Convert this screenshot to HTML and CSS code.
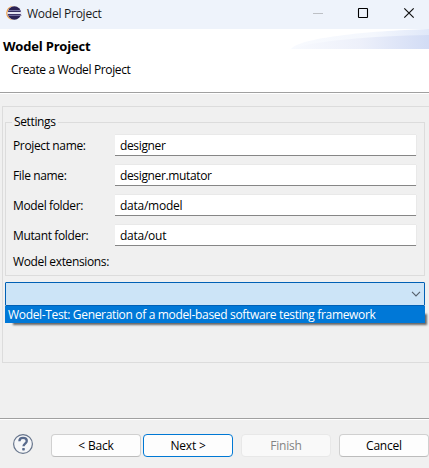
FILE: index.html
```html
<!DOCTYPE html>
<html lang="en">
<head>
<meta charset="utf-8">
<title>Wodel Project</title>
<link rel="stylesheet" href="styles.css">
</head>
<body>
<div class="window">
  <div class="titlebar">
    <svg class="logo" width="16" height="16" viewBox="0 0 16 16">
      <circle cx="7.2" cy="8" r="7" fill="#f39a35"/>
      <circle cx="8.4" cy="8" r="7" fill="#eef3fb"/>
      <circle cx="8.4" cy="8" r="6.7" fill="#2c2255"/>
      <path d="M2 5.6h13M1.5 10.3h14" stroke="#857fae" stroke-width="1"/>
      <path d="M1.4 8h14.2" stroke="#e6e5f2" stroke-width="2"/>
    </svg>
    <span class="caption">Wodel Project</span>
    <svg class="controls" width="110" height="20" viewBox="0 0 110 20">
      <path d="M4 10.5h10" stroke="#bdc0c5"/>
      <rect x="49.5" y="5.5" width="9" height="9" rx=".5" fill="none" stroke="#000" stroke-width="1.1"/>
      <path d="M95.3 5.3l9.4 9.4M104.7 5.3l-9.4 9.4" stroke="#111" stroke-width="1.2"/>
    </svg>
  </div>
  <div class="header">
    <h1>Wodel Project</h1>
    <p>Create a Wodel Project</p>
    <svg class="swoosh" width="138" height="20" viewBox="0 0 138 20">
      <defs>
        <linearGradient id="wave"><stop offset="0" stop-color="#f8fafe"/><stop offset=".5" stop-color="#edf0fa"/><stop offset="1" stop-color="#d2dcf5"/></linearGradient>
        <linearGradient id="haze"><stop offset="0" stop-color="#f8fafe"/><stop offset=".6" stop-color="#f4f7fd"/><stop offset="1" stop-color="#e0e8f9"/></linearGradient>
      </defs>
      <path d="M0 20C8 9 75 2 138 0v20z" fill="url(#haze)"/>
      <path d="M0 20C22 12 80 7 138 6v14z" fill="url(#wave)"/>
    </svg>
  </div>
  <div class="content">
    <div class="panel">
      <fieldset class="settings">
        <legend>Settings</legend>
        <div class="row"><label>Project name:</label><div class="field"><span>designer</span></div></div>
        <div class="row"><label>File name:</label><div class="field"><span>designer.mutator</span></div></div>
        <div class="row"><label>Model folder:</label><div class="field"><span class="path">data/model</span></div></div>
        <div class="row"><label>Mutant folder:</label><div class="field"><span class="path">data/out</span></div></div>
        <div class="row last"><label>Wodel extensions:</label></div>
      </fieldset>
      <div class="combo">
        <svg width="10" height="6" viewBox="0 0 10 6"><path d="M1 .9l4 4 4-4" fill="none" stroke="#555f6b" stroke-width="1.1"/></svg>
      </div>
      <div class="option"><span>Wodel-Test: Generation of a model-based software testing framework</span></div>
    </div>
  </div>
  <div class="footer">
    <svg class="help" width="22" height="22" viewBox="0 0 22 22">
      <circle cx="11" cy="11" r="9.4" fill="#f5f6f8" stroke="#67758c" stroke-width="1.2"/>
      <path d="M7.4 8.2C7.4 5.700 9 4.900 11 4.900c2.200 0 3.800 1.100 3.800 3 0 2.600-3.300 2.700-3.300 5.300" fill="none" stroke="#586a8c" stroke-width="2.300"/>
      <rect x="10.200" y="15" width="2.600" height="2.400" rx=".6" fill="#586a8c"/>
    </svg>
    <div class="button back"><span>&lt; Back</span></div>
    <div class="button next"><span>Next &gt;</span></div>
    <div class="button finish"><span>Finish</span></div>
    <div class="button cancel"><span>Cancel</span></div>
  </div>
</div>
</body>
</html>
```
FILE: styles.css
```css
* { box-sizing: border-box; }
body { margin: 0; overflow: hidden; }
.window {
  width: 429px; height: 468px; overflow: hidden;
  display: flex; flex-direction: column;
  background: #f0f0f0; color: #000;
  font: 12px/16px "Open Sans", "Noto Sans", sans-serif;
  letter-spacing: -0.36px;
  white-space: nowrap;
}
.titlebar {
  height: 29px; flex: none; display: flex; align-items: center;
  background: #eef3fb; padding: 0 10px 3px 6px; color: #1a1a1a;
}
.caption { margin-left: 5px; flex: 1; padding-top: 2px; letter-spacing: -0.25px; }
.header {
  position: relative; height: 65px; flex: none; background: #fff;
  padding: 9px 0 0 3px; border-bottom: 1px solid #fff;
  box-shadow: inset 0 -1px #a0a0a0;
}
h1 { margin: 0; font-size: 13px; line-height: 16px; font-weight: 700; letter-spacing: -0.2px; }
p { margin: 8px 0 0 8px; }
.swoosh { position: absolute; right: 0; top: 0; }
.content { flex: none; height: 324px; padding: 12px 0 0 2px; }
.panel {
  width: 440px; height: 257px; border: 1px solid #dcdcdc;
  padding: 7px 0 0 2px;
}
.settings {
  width: 420px; height: 162px; margin: 0; padding: 5px 8px 0 7px;
  border: 1px solid #dcdcdc; min-width: 0;
}
legend { padding: 0 2px; margin-left: -1px; height: 16px; }
.row { display: grid; grid-template-columns: 102px 1fr; height: 21px; margin-bottom: 9px; align-items: center; }
.row.last { height: 18px; margin-top: -2px; }
.field {
  height: 21px; width: 301px; background: #fff; padding: 3px 0 0 5px;
  line-height: 16px;
  border-bottom: 1px solid #868686; box-shadow: 0 -1px #e9e9e9, 1px 0 #e9e9e9;
}
.path { letter-spacing: -0.25px; }
.combo {
  width: 420px; height: 24px; margin-top: 6px; padding-right: 3px;
  display: flex; align-items: center; justify-content: flex-end;
  background: #cce4f7; border: 1px solid #0060b5; border-radius: 1px;
}
.option {
  width: 420px; height: 17px; padding-left: 3px; line-height: 17px;
  color: #fff; background: #0078d7; box-shadow: 5px 5px 2px -3px #666;
  letter-spacing: -0.335px;
}
.footer {
  flex: none; height: 50px; border-top: 1px solid #a0a0a0;
  box-shadow: inset 0 1px #fff; display: flex; padding: 15px 0 0 12px;
}
.help { margin-top: -1px; }
.button {
  width: 90px; height: 23px; flex: none; text-align: center; line-height: 22px;
  background: #fdfdfd; border: 1px solid #d0d0d0; border-bottom-color: #bcbcbc; border-radius: 4px;
  letter-spacing: -0.2px;
}
.back { margin-left: 17px; }
.next { margin-left: 2px; border-color: #0078d4; }
.finish { margin-left: 8px; color: #838383; background: #f9f9f9; border-color: #e8e8e8; }
.cancel { margin-left: 8px; }
```
